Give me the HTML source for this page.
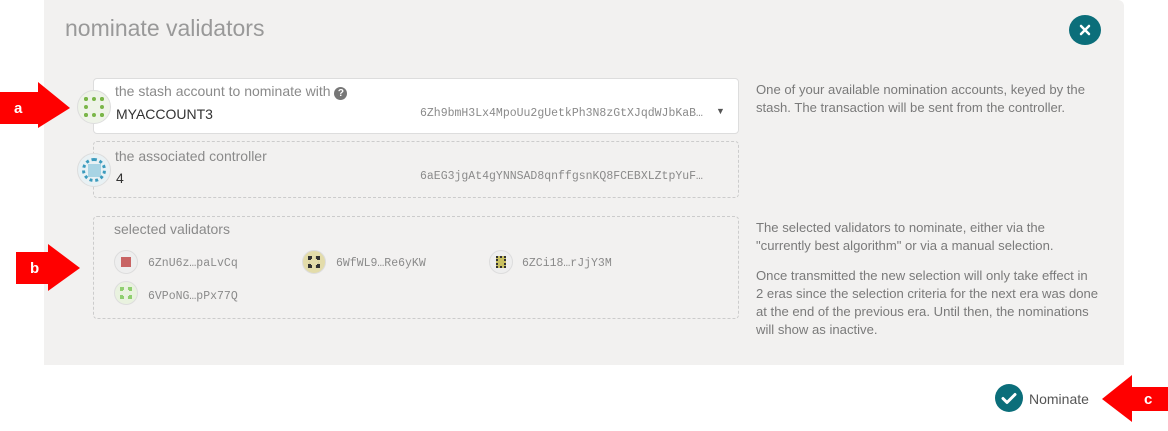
<!DOCTYPE html><html><head><meta charset="utf-8"><style>
*{margin:0;padding:0;box-sizing:border-box}
body{width:1168px;height:431px;background:#fff;font-family:"Liberation Sans",sans-serif;position:relative;overflow:hidden;color:#4e4e4e}
.a{position:absolute}
.panel{left:44px;top:0;width:1080px;height:365px;background:#f2f1f0;border-radius:0 6px 0 0}
.lbl{font-size:14px;color:#8a8a8a}
.mono{font-family:"Liberation Mono",monospace;font-size:11.5px;color:#8a8a8a}
.help{font-size:13.1px;color:#7a7a7a;line-height:18px}
.circ{border-radius:50%;background:#eee;border:1px solid #ddd}
</style></head><body>
<div class="a panel"></div>
<div class="a" style="left:65px;top:15px;font-size:23px;color:#999">nominate validators</div>
<div class="a" style="left:1069px;top:15px;width:32px;height:30px;border-radius:50%;background:#0b6e7a"><svg width="32" height="30"><path d="M12 11l8 8M20 11l-8 8" stroke="#fff" stroke-width="2.5" stroke-linecap="round"/></svg></div>

<div class="a" style="left:93px;top:78px;width:646px;height:56px;background:#fff;border:1px solid #ddd;border-radius:4px"></div>
<div class="a circ" style="left:77px;top:90px;width:34px;height:34px;background:#eef3e8"><div class="a" style="left:6px;top:6px;width:20px;height:20px;border:4px dotted #7ab648"></div></div>
<div class="a lbl" style="left:115px;top:83px">the stash account to nominate with <span style="display:inline-block;width:13px;height:13px;border-radius:50%;background:#777;color:#fff;font-size:10px;text-align:center;line-height:13px;font-weight:bold">?</span></div>
<div class="a" style="left:116px;top:106px;font-size:14px;color:#333">MYACCOUNT3</div>
<div class="a mono" style="left:420px;top:107px">6Zh9bmH3Lx4MpoUu2gUetkPh3N8zGtXJqdWJbKaB…</div>
<div class="a" style="left:716px;top:106px;font-size:9px;color:#555">▼</div>

<div class="a" style="left:93px;top:141px;width:646px;height:57px;border:1px dashed #ccc;border-radius:4px"></div>
<div class="a circ" style="left:77px;top:153px;width:34px;height:34px;background:#e8f1f4"><div class="a" style="left:10px;top:10px;width:13px;height:13px;background:#a8d4e4"></div><div class="a" style="left:4px;top:4px;width:24px;height:24px;border:3px dotted #3b9bbd;border-radius:50%"></div></div>
<div class="a lbl" style="left:115px;top:148px">the associated controller</div>
<div class="a" style="left:116px;top:170px;font-size:14px;color:#333">4</div>
<div class="a mono" style="left:420px;top:170px">6aEG3jgAt4gYNNSAD8qnffgsnKQ8FCEBXLZtpYuF…</div>

<div class="a help" style="left:756px;top:81px">One of your available nomination accounts, keyed by the<br>stash. The transaction will be sent from the controller.</div>

<div class="a" style="left:93px;top:216px;width:646px;height:103px;border:1px dashed #ccc;border-radius:4px"></div>
<div class="a lbl" style="left:114px;top:221px">selected validators</div>
<div class="a circ" style="left:114px;top:250px;width:24px;height:24px"><div class="a" style="left:6px;top:6px;width:10px;height:10px;background:#c86464"></div></div>
<div class="a mono" style="left:148px;top:257px">6ZnU6z…paLvCq</div>
<div class="a circ" style="left:302px;top:250px;width:24px;height:24px;background:#e3dcaa"><div class="a" style="left:5px;top:5px;width:12px;height:12px;border:3px dotted #333"></div></div>
<div class="a mono" style="left:336px;top:257px">6WfWL9…Re6yKW</div>
<div class="a circ" style="left:489px;top:250px;width:24px;height:24px"><div class="a" style="left:6px;top:5px;width:10px;height:12px;background:#c9c060;border:2px dotted #333"></div></div>
<div class="a mono" style="left:522px;top:257px">6ZCi18…rJjY3M</div>
<div class="a circ" style="left:114px;top:281px;width:24px;height:24px;background:#e9f2df"><div class="a" style="left:5px;top:5px;width:12px;height:12px;border:3px dotted #8fcf6f"></div></div>
<div class="a mono" style="left:148px;top:290px">6VPoNG…pPx77Q</div>

<div class="a help" style="left:756px;top:219px">The selected validators to nominate, either via the<br>"currently best algorithm" or via a manual selection.</div>
<div class="a help" style="left:756px;top:267px">Once transmitted the new selection will only take effect in<br>2 eras since the selection criteria for the next era was done<br>at the end of the previous era. Until then, the nominations<br>will show as inactive.</div>

<div class="a" style="left:995px;top:384px;width:28px;height:28px;border-radius:50%;background:#0b6e7a"><svg width="28" height="28"><path d="M8 14.5l4 4 8-8" stroke="#fff" stroke-width="3" fill="none" stroke-linecap="round" stroke-linejoin="round"/></svg></div>
<div class="a" style="left:1029px;top:391px;font-size:14px;color:#555">Nominate</div>

<svg class="a" style="left:0;top:0" width="1168" height="431">
<polygon points="0,92 38,92 38,82 70,108 38,128 38,124 0,124" fill="#f00"/>
<polygon points="16,252 48,252 48,244 80,268 48,291 48,284 16,284" fill="#f00"/>
<polygon points="1168,387 1132,387 1132,375 1102,399 1132,422 1132,411 1168,411" fill="#f00"/>
<text x="14" y="113" fill="#fff" font-size="15" font-weight="bold" font-family="Liberation Sans">a</text>
<text x="30" y="273" fill="#fff" font-size="15" font-weight="bold" font-family="Liberation Sans">b</text>
<text x="1144" y="404" fill="#fff" font-size="15" font-weight="bold" font-family="Liberation Sans">c</text>
</svg>
</body></html>
